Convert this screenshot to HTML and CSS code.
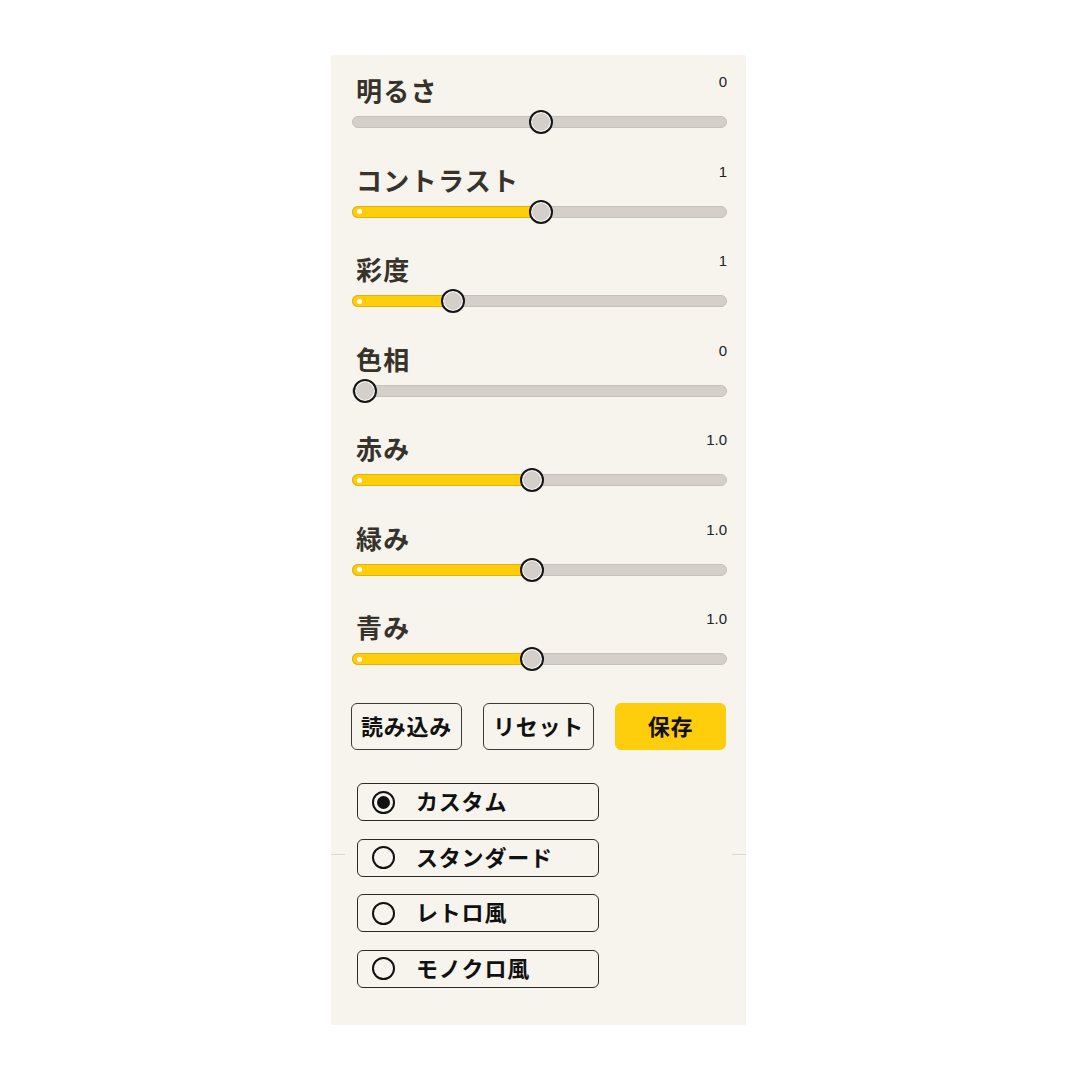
FILE: index.html
```html
<!DOCTYPE html>
<html lang="ja">
<head>
<meta charset="utf-8">
<title>補正</title>
<link rel="stylesheet" href="styles.css">
</head>
<body>
<div class="panel">
  <div class="sliders">
    <div class="row">
      <div class="head"><span class="label">明るさ</span><span class="value">0</span></div>
      <div class="track"><span class="knob" style="--p:0.5"></span></div>
    </div>
    <div class="row">
      <div class="head"><span class="label">コントラスト</span><span class="value">1</span></div>
      <div class="track"><span class="fill" style="--p:0.5"></span><span class="knob" style="--p:0.5"></span></div>
    </div>
    <div class="row">
      <div class="head"><span class="label">彩度</span><span class="value">1</span></div>
      <div class="track"><span class="fill" style="--p:0.25"></span><span class="knob" style="--p:0.25"></span></div>
    </div>
    <div class="row">
      <div class="head"><span class="label">色相</span><span class="value">0</span></div>
      <div class="track"><span class="knob" style="--p:0"></span></div>
    </div>
    <div class="row">
      <div class="head"><span class="label">赤み</span><span class="value">1.0</span></div>
      <div class="track"><span class="fill" style="--p:0.476"></span><span class="knob" style="--p:0.476"></span></div>
    </div>
    <div class="row">
      <div class="head"><span class="label">緑み</span><span class="value">1.0</span></div>
      <div class="track"><span class="fill" style="--p:0.476"></span><span class="knob" style="--p:0.476"></span></div>
    </div>
    <div class="row">
      <div class="head"><span class="label">青み</span><span class="value">1.0</span></div>
      <div class="track"><span class="fill" style="--p:0.476"></span><span class="knob" style="--p:0.476"></span></div>
    </div>
  </div>

  <div class="buttons">
    <button class="btn">読み込み</button>
    <button class="btn">リセット</button>
    <button class="btn primary">保存</button>
  </div>

  <div class="presets">
    <label class="preset"><span class="radio checked"></span><span class="ptext">カスタム</span></label>
    <label class="preset"><span class="radio"></span><span class="ptext">スタンダード</span></label>
    <label class="preset"><span class="radio"></span><span class="ptext">レトロ風</span></label>
    <label class="preset"><span class="radio"></span><span class="ptext">モノクロ風</span></label>
  </div>
</div>
</body>
</html>
```

FILE: styles.css
```css
* { box-sizing: border-box; }

html, body {
  margin: 0;
  padding: 0;
  background: #ffffff;
}

body {
  font-family: "Noto Sans CJK JP", "Noto Sans", sans-serif;
}

.panel {
  width: 415px;
  height: 970px;
  margin: 55px 0 0 331px;
  padding: 19px 19px 0 21px;
  background:
    linear-gradient(#dcd9d2, #dcd9d2) 0 799px / 14px 1px no-repeat,
    linear-gradient(#dcd9d2, #dcd9d2) 100% 799px / 14px 1px no-repeat,
    #f7f4ee;
}

.sliders {
  display: flex;
  flex-direction: column;
  gap: 35.5px;
}

.head {
  display: flex;
  justify-content: space-between;
  align-items: flex-start;
  height: 36px;
  padding-left: 4px;
}

.label {
  font-size: 26px;
  line-height: 32px;
  font-weight: 700;
  letter-spacing: 1.3px;
  color: #37332a;
}

.value {
  font-family: "Liberation Sans", Arial, sans-serif;
  font-size: 15px;
  line-height: 18px;
  color: #222;
  margin-top: -1px;
}

.track {
  position: relative;
  margin-top: 6px;
  height: 12px;
  border-radius: 6px;
  background: #d4d0c9;
  border: 1px solid #c5c1ba;
}

.fill {
  position: absolute;
  left: -1px;
  top: -1px;
  height: 12px;
  width: calc(12px + var(--p) * 352px);
  border-radius: 6px 0 0 6px;
  background: #fecd0c;
  border: 1px solid #e3b400;
  border-right: none;
}

.fill::before {
  content: "";
  position: absolute;
  left: 4px;
  top: 2.5px;
  width: 5px;
  height: 5px;
  border-radius: 50%;
  background: #ffffff;
}

.knob {
  position: absolute;
  top: 50%;
  left: calc(-0.5px + var(--p) * 352px);
  width: 24px;
  height: 24px;
  margin-top: -12px;
  border-radius: 50%;
  background: #d4d0c9;
  border: 2px solid #151515;
  box-shadow: inset 0 0 0 1px #ffffff;
}

.buttons {
  display: grid;
  grid-template-columns: repeat(3, 111px);
  gap: 21px;
  margin: 38px 0 0 -1px;
}

.btn {
  height: 47px;
  padding: 0 0 4px;
  border: 1px solid #3a3a3a;
  border-radius: 6px;
  background: transparent;
  font-family: "Noto Sans CJK JP", "Noto Sans", sans-serif;
  font-size: 22px;
  font-weight: 700;
  letter-spacing: 0.8px;
  color: #111;
}

.btn.primary {
  background: #fecd0c;
  border-color: #fecd0c;
}

.presets {
  display: flex;
  flex-direction: column;
  gap: 17.5px;
  margin: 33px 0 0 5px;
}

.preset {
  display: flex;
  align-items: center;
  gap: 21px;
  width: 242px;
  height: 38px;
  padding-left: 14px;
  border: 1px solid #2a2a2a;
  border-radius: 6px;
}

.radio {
  position: relative;
  width: 23px;
  height: 23px;
  border-radius: 50%;
  border: 2px solid #111;
  flex: none;
}

.radio.checked::after {
  content: "";
  position: absolute;
  left: 3px;
  top: 3px;
  width: 13px;
  height: 13px;
  border-radius: 50%;
  background: #111;
}

.ptext {
  font-size: 22px;
  line-height: 1;
  font-weight: 700;
  letter-spacing: 0.8px;
  color: #111;
  padding-bottom: 4px;
}
```
